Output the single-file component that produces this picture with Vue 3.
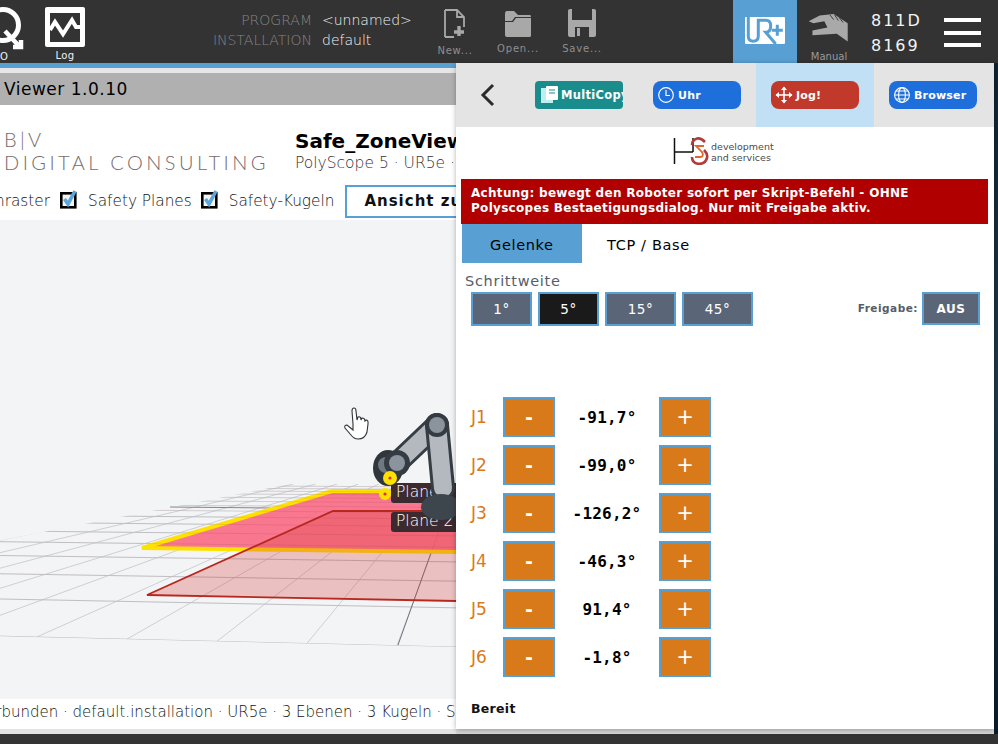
<script setup>
const stepButtons = [
  { label: '1°', cls: 'w60' },
  { label: '5°', cls: 'w60 on' },
  { label: '15°', cls: 'w70' },
  { label: '45°', cls: 'w70' }
]
const joints = [
  ['J1', '-91,7°'], ['J2', '-99,0°'], ['J3', '-126,2°'],
  ['J4', '-46,3°'], ['J5', '91,4°'], ['J6', '-1,8°']
]
const vpX = 473, vpY = 442
const longLines = []
for (let i = -9; i < 6; i++) {
  const bx = 37 + i * 90
  const by = 636 + 0.024 * bx
  const ty = 484
  const t = (by - ty) / (by - vpY)
  longLines.push({ x1: bx, y1: by, x2: bx + (vpX - bx) * t, y2: ty })
}
const crossLines = []
for (let n = 0; n < 16; n++) {
  const inv = 0.00515 + n * 0.00122
  const y0 = vpY + 1 / inv
  const s = 0.024 * (y0 - vpY) / 194
  crossLines.push({ y1: y0, y2: y0 + s * 456, o: n > 7 ? 0.55 : 1 })
}
</script>

<template>
  <div class="screen">
    <header class="topbar">
      <div class="tool tool-q">
        <svg width="24" height="50" viewBox="0 0 24 50">
          <circle cx="3" cy="25" r="15.5" fill="none" stroke="#fff" stroke-width="5" />
          <path d="M5 31 L19 46 M21 40 V47 H13" fill="none" stroke="#fff" stroke-width="4.5" />
        </svg>
        <span class="tool-label q-label">O</span>
      </div>
      <div class="tool tool-log">
        <svg width="40" height="40" viewBox="0 0 40 40">
          <rect width="40" height="40" rx="2" fill="#fff" />
          <rect x="5" y="6" width="30" height="29" fill="#333" />
          <path d="M5 23 L10 15 L18 27 L27 13 L31 20 H35" fill="none" stroke="#fff" stroke-width="4" />
        </svg>
        <span class="tool-label">Log</span>
      </div>
      <div class="prog-names">
        <div class="names-l"><span>PROGRAM</span><span>INSTALLATION</span></div>
        <div class="names-r"><span>&lt;unnamed&gt;</span><span>default</span></div>
      </div>
      <div class="file file-new">
        <svg width="22" height="30" viewBox="0 0 22 30">
          <path d="M1 1 H13 L20 8 V18 M10 28 H1 Z M1 1 V28 M13 1 V8 H20" fill="none" stroke="#a8a8a8" stroke-width="1.8" />
          <path d="M15 17 V27 M10 23 H20" stroke="#a8a8a8" stroke-width="3.4" />
        </svg>
        <span>New...</span>
      </div>
      <div class="file file-open">
        <svg width="28" height="28" viewBox="0 0 28 28">
          <path d="M1 4 Q1 1 3 1 H10 L14 5 H26 Q27 5 27 7 V7 H11 L8 11 H1 Z" fill="#a8a8a8" />
          <path d="M1 12 H9 L12 8 H27 V26 Q27 27 25 27 H3 Q1 27 1 25 Z" fill="#a8a8a8" />
        </svg>
        <span>Open...</span>
      </div>
      <div class="file file-save">
        <svg width="28" height="28" viewBox="0 0 28 28">
          <path d="M2 0 H26 Q28 0 28 2 V26 Q28 28 26 28 H2 Q0 28 0 26 V2 Q0 0 2 0 Z" fill="#a8a8a8" />
          <rect x="4" y="0" width="20" height="13" fill="#333" />
          <rect x="7" y="18" width="14" height="10" fill="#333" />
          <rect x="9" y="19" width="3" height="8" fill="#a8a8a8" />
          <rect x="4" y="11" width="20" height="3" fill="#a8a8a8" />
        </svg>
        <span>Save...</span>
      </div>
      <div class="urplus">
        <svg width="40" height="27" viewBox="0 0 40 27">
          <rect width="40" height="27" rx="1" fill="#fff" />
          <path d="M3.300 0 V19 Q3.300 24.300 8.300 24.300 Q13.300 24.300 13.300 19 V3.300 H20.700 Q25.700 3.300 25.700 9 Q25.700 15.300 20.700 15.300 L30.700 27" fill="none" stroke="#589fd3" stroke-width="3" />
          <path d="M32.300 7.800 V18.800 M26.800 13.300 H37.800" stroke="#589fd3" stroke-width="3" />
        </svg>
      </div>
      <div class="manual">
        <svg width="44" height="31" viewBox="0 0 44 31">
          <path d="M0.300 7.700 L12 1.700 L27 0 L42 10 V29.300 L30.300 21 L4.300 22.700 V17.700 L20.300 14.300 L17 7.700 L5.300 10 Z" fill="#a9a9a9" />
          <path d="M23 1 L27 6 M28 1 L32 7 M33 4 L37 9" stroke="#333" stroke-width="1" />
        </svg>
        <span>Manual</span>
      </div>
      <div class="serial"><span>811D</span><span>8169</span></div>
      <div class="burger"><i></i><i></i><i></i></div>
    </header>

    <div class="middle">
      <section class="viewer">
        <div class="v-stripe"></div>
        <div class="v-gap"></div>
        <div class="v-title">Viewer 1.0.10</div>
        <div class="v-head">
          <div class="head-top">
            <div class="brand">
              <span class="brand-a">B|V</span>
              <span class="brand-b">DIGITAL CONSULTING</span>
            </div>
            <div class="title-block">
              <strong>Safe_ZoneViewer</strong>
              <span>PolyScope 5 · UR5e · Live</span>
            </div>
          </div>
          <div class="head-opts">
            <span class="opt opt-first">Fachraster</span>
            <span class="check"><svg width="18" height="20" viewBox="0 0 18 20"><rect x="1.300" y="4.300" width="14" height="14" fill="#f4f4f4" stroke="#000" stroke-width="2.600"/><path d="M4.500 10 L8 15 L15 2" fill="none" stroke="#5ba6dc" stroke-width="3.600"/></svg></span>
            <span class="opt">Safety Planes</span>
            <span class="check"><svg width="18" height="20" viewBox="0 0 18 20"><rect x="1.300" y="4.300" width="14" height="14" fill="#f4f4f4" stroke="#000" stroke-width="2.600"/><path d="M4.500 10 L8 15 L15 2" fill="none" stroke="#5ba6dc" stroke-width="3.600"/></svg></span>
            <span class="opt">Safety-Kugeln</span>
            <span class="reset-btn">Ansicht zurücksetzen</span>
          </div>
        </div>
        <div class="canvas">
          <svg width="456" height="479" viewBox="0 220 456 479">
            <defs>
              <clipPath id="floor">
                <path d="M290 484 H456 V647 L-400 627 L-100 560 Z" />
              </clipPath>
            </defs>
            <g clip-path="url(#floor)" stroke="#cbd0d4" stroke-width="1" fill="none">
              <line v-for="(l, i) in longLines" :key="'l' + i" :x1="l.x1" :y1="l.y1" :x2="l.x2" :y2="l.y2" />
              <line v-for="(l, i) in crossLines" :key="'c' + i" x1="0" :y1="l.y1" x2="456" :y2="l.y2" :stroke-opacity="l.o" />
            </g>
            <line x1="170" y1="507" x2="270" y2="508" stroke="#7f868c" stroke-width="1" />
            <line x1="398" y1="645" x2="442" y2="522" stroke="#6e757b" stroke-width="1" />
            <polygon points="142,548 332,491 456,491 456,552" fill="#fb6a84" fill-opacity="0.9" />
            <polyline points="456,491 332,491 142,548 456,552" fill="none" stroke="#ffe100" stroke-width="4" />
            <polygon points="147,595 333,511 456,511 456,601" fill="#d93a3a" fill-opacity="0.28" />
            <polyline points="456,511 333,511 147,595 456,601" fill="none" stroke="#b8281f" stroke-width="1.800" />
            <g clip-path="url(#floor)" stroke="#7c3a44" stroke-opacity="0.15" stroke-width="0.8">
              <line v-for="(l, i) in crossLines" :key="'p' + i" x1="0" :y1="l.y1" x2="456" :y2="l.y2" />
            </g>
            <rect x="391" y="483" width="70" height="20" rx="3" fill="#3b2b31" />
            <rect x="391" y="512" width="70" height="20" rx="3" fill="#3b2b31" />
            <text x="396" y="497" class="plane-label">Plane 1</text>
            <text x="396" y="526" class="plane-label">Plane 2</text>
            <line x1="397" y1="463" x2="437" y2="425" stroke="#363d44" stroke-width="23" stroke-linecap="round" />
            <line x1="397" y1="463" x2="437" y2="425" stroke="#b4b9c0" stroke-width="17" stroke-linecap="round" />
            <line x1="437" y1="425" x2="443" y2="488" stroke="#363d44" stroke-width="24" stroke-linecap="round" />
            <line x1="437" y1="425" x2="443" y2="488" stroke="#b4b9c0" stroke-width="18" stroke-linecap="round" />
            <ellipse cx="441" cy="507" rx="20" ry="13" fill="#3e464d" />
            <circle cx="437" cy="425" r="12" fill="#343b42" />
            <circle cx="437" cy="425" r="8" fill="#8b949c" />
            <ellipse cx="388" cy="468" rx="15" ry="18" fill="#2f363c" />
            <circle cx="386" cy="465" r="8" fill="#6f7880" />
            <circle cx="397" cy="463" r="13" fill="#343b42" />
            <circle cx="397" cy="463" r="8" fill="#8b949c" />
            <circle cx="390" cy="478" r="7" fill="#ffe100" />
            <circle cx="390" cy="478" r="1.600" fill="#d4303e" />
            <circle cx="385" cy="494" r="6" fill="#ffe100" />
            <circle cx="385" cy="494" r="1.600" fill="#d4303e" />
            <path d="M353 424 L352 411 Q352 408 354 408 Q356 408 356 411 L357 420 L358 417 Q361 416 361 420 L362 418 Q365 418 365 421 L366 420 Q368.500 420 368 424 L367 432 Q365 439 358 439 Q354 439 351 435 L345 428 Q344 425 347 425 L353 430 Z" fill="#fff" stroke="#2e3338" stroke-width="1.100" />
          </svg>
        </div>
        <div class="status"><span>Verbunden · default.installation · UR5e · 3 Ebenen · 3 Kugeln · Safety</span></div>
        <div class="v-foot"></div>
      </section>

      <section class="panel">
        <nav class="nav">
          <svg class="back" width="16" height="24" viewBox="0 0 16 24"><path d="M13 2 L3 12 L13 22" fill="none" stroke="#2b2b2b" stroke-width="3" /></svg>
          <div class="nav-cell c1">
            <div class="nav-btn teal">
              <svg width="20" height="20" viewBox="0 0 20 20"><rect x="1" y="3" width="12" height="15" fill="#bdeff0"/><rect x="6" y="1" width="12" height="14" rx="1" fill="#fff"/><path d="M9 5 H15 M9 8 H15" stroke="#1a8c8c" stroke-width="1.200"/></svg>
              <span>MultiCopy</span>
            </div>
          </div>
          <div class="nav-cell c2">
            <div class="nav-btn blue">
              <svg width="18" height="18" viewBox="0 0 18 18"><circle cx="9" cy="9" r="7.300" fill="none" stroke="#fff" stroke-width="1.200"/><path d="M9 4 V9.500 H13" fill="none" stroke="#fff" stroke-width="1.200"/></svg>
              <span>Uhr</span>
            </div>
          </div>
          <div class="nav-cell active">
            <div class="nav-btn red">
              <svg width="18" height="18" viewBox="0 0 18 18"><path d="M9 1 V17 M1 9 H17" stroke="#fff" stroke-width="1.600"/><path d="M6 4 L9 0.500 L12 4 Z M6 14 L9 17.500 L12 14 Z M4 6 L0.500 9 L4 12 Z M14 6 L17.500 9 L14 12 Z" fill="#fff"/></svg>
              <span>Jog!</span>
            </div>
          </div>
          <div class="nav-cell c4">
            <div class="nav-btn blue">
              <svg width="18" height="18" viewBox="0 0 18 18" fill="none" stroke="#fff" stroke-width="1.100"><circle cx="9" cy="9" r="7.400"/><ellipse cx="9" cy="9" rx="3.400" ry="7.400"/><path d="M1.600 9 H16.400 M2.600 5 H15.400 M2.600 13 H15.400"/></svg>
              <span>Browser</span>
            </div>
          </div>
        </nav>

        <div class="logo">
          <svg width="36" height="28" viewBox="0 0 36 28">
            <path d="M1.500 1 V27 M1.500 15 H20 M20 15 V1" fill="none" stroke="#111" stroke-width="1.500" />
            <path d="M32 5 Q28 0.800 24 1.500 Q19 3 19 8 M19 20 Q19 26 25 26.800 Q32 27.500 34 21 Q35 17 31 13" fill="none" stroke="#b33a3a" stroke-width="2.600" />
            <path d="M31 9 H23 L29 15 Q31 19 28 20 H22" fill="none" stroke="#e0672f" stroke-width="1.800" />
          </svg>
          <div class="logo-text"><span>development</span><span>and services</span></div>
        </div>

        <div class="warning">Achtung: bewegt den Roboter sofort per Skript-Befehl - OHNE<br />Polyscopes Bestaetigungsdialog. Nur mit Freigabe aktiv.</div>

        <div class="tabs">
          <div class="tab current">Gelenke</div>
          <div class="tab">TCP / Base</div>
        </div>

        <div class="step-label">Schrittweite</div>
        <div class="step-row">
          <button v-for="b in stepButtons" :key="b.label" class="step" :class="b.cls">{{ b.label }}</button>
          <span class="freigabe">Freigabe:</span>
          <button class="step aus">AUS</button>
        </div>

        <div class="joints">
          <div v-for="j in joints" :key="j[0]" class="joint">
            <span class="j-name">{{ j[0] }}</span>
            <button class="jog">-</button>
            <span class="j-val">{{ j[1] }}</span>
            <button class="jog plus">+</button>
          </div>
        </div>

        <div class="ready">Bereit</div>
      </section>
      <div class="edge"></div>
    </div>
    <div class="bottom"></div>
  </div>
</template>

<style>
html, body { margin: 0; padding: 0; background: #333; }
</style>

<style scoped>
.screen {
  width: 998px; height: 744px; overflow: hidden; display: flex; flex-direction: column;
  font-family: "DejaVu Sans", sans-serif; background: #333;
}
.topbar { height: 63px; flex: none; background: #333; display: flex; color: #fff; overflow: hidden; }
.tool { position: relative; display: flex; flex-direction: column; align-items: center; flex: none; }
.tool-q { width: 24px; margin-right: 21px; }
.tool-log { width: 40px; padding-top: 7px; }
.tool-label { font-size: 10px; line-height: 12px; margin-top: 3px; color: #f0f0f0; letter-spacing: .4px; }
.q-label { position: absolute; left: 0; top: 51px; margin: 0; }
.prog-names { display: flex; gap: 10px; margin-left: 130px; width: 208px; padding-top: 10px; font-size: 14px; line-height: 20px; flex: none; box-sizing: border-box; }
.names-l { width: 97px; display: flex; flex-direction: column; align-items: flex-end; color: #858585; font-weight: 200; white-space: nowrap; }
.names-r { display: flex; flex-direction: column; color: #f2f2f2; font-weight: 200; white-space: nowrap; }
.file { width: 28px; flex: none; display: flex; flex-direction: column; align-items: center; color: #8f8f8f; font-size: 10px; }
.file span { margin-top: 6px; line-height: 12px; letter-spacing: .8px; white-space: nowrap; }
.file-new { margin-left: 18px; padding-top: 9px; }
.file-open { margin-left: 35px; padding-top: 10px; }
.file-open span { margin-top: 5px; }
.file-save { margin-left: 36px; padding-top: 9px; }
.urplus { width: 64px; margin-left: 137px; background: #589fd3; flex: none; display: flex; align-items: flex-start; justify-content: center; padding-top: 17px; box-sizing: border-box; }
.manual { width: 64px; flex: none; display: flex; flex-direction: column; align-items: center; padding-top: 14px; box-sizing: border-box; }
.manual span { font-size: 10px; color: #9a9a9a; margin-top: 8px; line-height: 12px; }
.serial { width: 72px; margin-left: 10px; flex: none; display: flex; flex-direction: column; padding-top: 8px; font-size: 16px; line-height: 25px; letter-spacing: 2px; color: #f4f4f4; box-sizing: border-box; }
.burger { flex: none; width: 37px; margin-left: 1px; padding-top: 18px; display: flex; flex-direction: column; gap: 8.500px; }
.burger i { display: block; height: 4px; background: #fff; }

.middle { height: 671px; flex: none; display: flex; background: #d6d6d6; }
.viewer { width: 456px; flex: none; overflow: hidden; display: flex; flex-direction: column; background: #e6e6e6; }
.v-stripe { height: 5px; background: #589fd3; }
.v-gap { height: 5px; background: #e6e6e6; }
.v-title { height: 32px; background: #b0b0b0; color: #000; font-size: 17px; line-height: 33px; padding-left: 4px; letter-spacing: .5px; }
.v-head { height: 115px; background: #fff; box-sizing: border-box; overflow: hidden; }
.head-top { display: flex; height: 78px; padding-top: 24px; box-sizing: border-box; }
.brand { width: 295px; flex: none; padding-left: 4px; box-sizing: border-box; display: flex; flex-direction: column; color: #776b6b; font-family: "Lato", sans-serif; font-weight: 300; white-space: nowrap; margin-top: -1px; }
.brand-a { font-size: 20px; line-height: 22px; letter-spacing: 3.3px; }
.brand-b { font-size: 20px; line-height: 24px; letter-spacing: 3.45px; }
.title-block { display: flex; flex-direction: column; white-space: nowrap; }
.title-block strong { font-size: 20px; line-height: 24px; color: #000; }
.title-block span { font-size: 15.500px; line-height: 20px; color: #333; font-weight: 200; }
.head-opts { display: flex; align-items: center; height: 34px; margin-left: -36px; margin-top: 1px; white-space: nowrap; }
.opt { font-size: 15.300px; font-weight: 200; color: #111; }
.opt-first { width: 86px; flex: none; text-align: right; margin-right: 10px; }
.check { width: 18px; height: 20px; flex: none; margin-right: 10px; margin-top: -5px; }
.check + .opt + .check { margin-left: 9px; }
.reset-btn { flex: none; margin-left: 11px; height: 33px; line-height: 29px; border: 2px solid #589fd3; padding: 0 17px; box-sizing: border-box; font-size: 15px; font-weight: 700; color: #111; letter-spacing: 1px; }
.canvas { height: 479px; background: #f3f4f6; overflow: hidden; }
.canvas svg { display: block; }
.plane-label { font-family: "DejaVu Sans", sans-serif; font-size: 15.500px; fill: #fff; font-weight: 200; }
.status { height: 30px; background: #fff; font-size: 15px; font-weight: 200; color: #111; line-height: 26px; white-space: nowrap; overflow: hidden; }
.status span { display: block; margin-left: -23px; }
.v-foot { height: 5px; background: #e2e2e2; }

.panel {
  width: 538px; height: 666px; flex: none; background: #fff; position: relative; z-index: 2;
  box-shadow: 0 1px 5px rgba(0,0,0,.3); display: flex; flex-direction: column;
}
.nav { height: 64px; flex: none; background: #e4e4e4; display: flex; position: relative; }
.back { position: absolute; left: 24px; top: 20px; }
.nav-cell { width: 118px; flex: none; display: flex; justify-content: center; padding-top: 18px; box-sizing: border-box; }
.nav-cell.c1 { margin-left: 64px; }
.nav-cell.active { background: #c1dff5; }
.nav-btn { width: 88px; height: 28px; border-radius: 8px; display: flex; align-items: center; gap: 3px; box-sizing: border-box; padding-left: 4px; color: #fff; font-size: 11px; font-weight: 700; white-space: nowrap; overflow: hidden; letter-spacing: .2px; }
.teal { background: #1a8c8c; border-radius: 4px; gap: 1px; padding-left: 5px; font-size: 11.500px; letter-spacing: .3px; }
.teal svg { flex: none; }
.blue { background: #1e6fdc; }
.red { background: #c0392b; }
.logo { height: 52px; flex: none; display: flex; align-items: flex-start; padding: 10px 0 0 217px; box-sizing: border-box; gap: 2px; }
.logo-text { display: flex; flex-direction: column; font-size: 9.500px; line-height: 10.500px; color: #4b4b4b; margin-top: 5px; }
.warning { height: 45px; margin: 0 6px 0 5px; flex: none; background: #b00000; color: #fff; font-size: 12px; font-weight: 700; line-height: 15px; padding: 7px 10px; box-sizing: border-box; letter-spacing: .3px; white-space: nowrap; }
.tabs { height: 39px; flex: none; margin-left: 6px; display: flex; font-size: 14.500px; color: #000; letter-spacing: .65px; }
.tab { line-height: 42px; padding-left: 25px; width: 120px; box-sizing: border-box; white-space: nowrap; }
.tab.current { background: #589fd3; padding-left: 28px; }
.step-label { margin: 10px 0 0 9px; height: 16px; line-height: 16px; font-size: 14.500px; color: #565d68; letter-spacing: .7px; }
.step-row { display: flex; align-items: flex-start; margin: 3px 14px 0 15px; gap: 6px; height: 34px; }
.step { height: 34px; box-sizing: border-box; border: 2px solid #589fd3; background: #5b6578; color: #fff; font-family: inherit; font-size: 13.500px; padding: 0; letter-spacing: .6px; }
.step.w60 { width: 61px; }
.step.w70 { width: 71px; }
.step.on { background: #1a1a1a; }
.freigabe { margin-left: auto; font-size: 10.500px; font-weight: 700; color: #565d68; line-height: 32px; letter-spacing: .5px; margin-right: -2px; }
.step.aus { width: 58px; height: 33px; font-size: 12px; font-weight: 700; }
.joints { margin: 71px 0 0 15px; display: flex; flex-direction: column; gap: 8px; }
.joint { display: flex; align-items: center; height: 40px; }
.j-name { width: 32px; color: #d97a1a; font-size: 17px; margin-top: -1px; }
.jog { width: 52px; height: 40px; box-sizing: border-box; border: 2px solid #589fd3; background: #d97a1a; color: #fff; font-family: inherit; font-size: 19px; font-weight: 700; padding: 0; line-height: 1; }
.jog.plus { font-weight: 400; font-size: 21px; }
.j-val { width: 104px; text-align: center; font-family: "DejaVu Sans Mono", monospace; font-size: 16px; font-weight: 700; color: #000; letter-spacing: .2px; }
.ready { margin: 24px 0 0 15px; font-size: 12.500px; font-weight: 700; color: #111; line-height: 16px; letter-spacing: .3px; }
.edge { flex: 1; height: 671px; background: linear-gradient(180deg, #0d2233, #1d3a4a 50%, #0a1c2c); }
.bottom { flex: 1; background: #333; }
</style>
